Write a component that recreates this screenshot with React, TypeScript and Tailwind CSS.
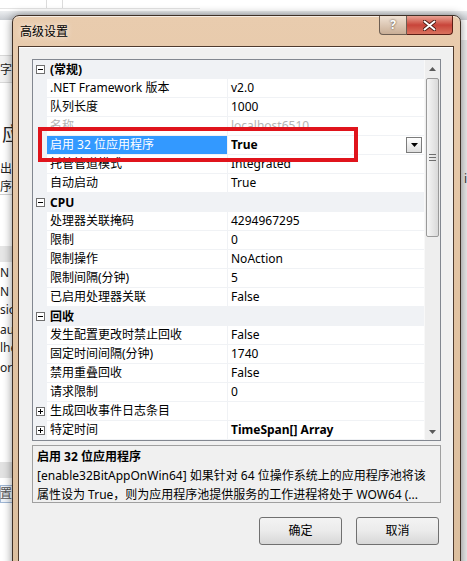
import React from "react";

type Row =
  | { kind: "cat"; label: string }
  | {
      kind: "prop";
      name: string;
      value: string;
      faded?: boolean;
      selected?: boolean;
      bold?: boolean;
      expander?: boolean;
    };

const rows: Row[] = [
  { kind: "cat", label: "(常规)" },
  { kind: "prop", name: ".NET Framework 版本", value: "v2.0" },
  { kind: "prop", name: "队列长度", value: "1000" },
  { kind: "prop", name: "名称", value: "localhost6510", faded: true },
  { kind: "prop", name: "启用 32 位应用程序", value: "True", selected: true, bold: true },
  { kind: "prop", name: "托管管道模式", value: "Integrated" },
  { kind: "prop", name: "自动启动", value: "True" },
  { kind: "cat", label: "CPU" },
  { kind: "prop", name: "处理器关联掩码", value: "4294967295" },
  { kind: "prop", name: "限制", value: "0" },
  { kind: "prop", name: "限制操作", value: "NoAction" },
  { kind: "prop", name: "限制间隔(分钟)", value: "5" },
  { kind: "prop", name: "已启用处理器关联", value: "False" },
  { kind: "cat", label: "回收" },
  { kind: "prop", name: "发生配置更改时禁止回收", value: "False" },
  { kind: "prop", name: "固定时间间隔(分钟)", value: "1740" },
  { kind: "prop", name: "禁用重叠回收", value: "False" },
  { kind: "prop", name: "请求限制", value: "0" },
  { kind: "prop", name: "生成回收事件日志条目", value: "", expander: true },
  { kind: "prop", name: "特定时间", value: "TimeSpan[] Array", bold: true, expander: true },
];

// 树形展开框 ⊟ / ⊞
function Toggle({ plus }: { plus?: boolean }) {
  return (
    <svg width="9" height="9" viewBox="0 0 9 9" className="block">
      <rect x="0.5" y="0.5" width="8" height="8" fill="#fff" stroke="#6f6f6f" />
      <line x1="2" y1="4.5" x2="7" y2="4.5" stroke="#000" />
      {plus && <line x1="4.5" y1="2" x2="4.5" y2="7" stroke="#000" />}
    </svg>
  );
}

function GridRow({ row }: { row: Row }) {
  if (row.kind === "cat") {
    return (
      <div className="flex h-[19px] items-center bg-[#f0f2f5]">
        <div className="flex w-[14px] justify-end pr-[2px]">
          <Toggle />
        </div>
        <span className="pl-[3px] font-bold text-black">{row.label}</span>
      </div>
    );
  }
  return (
    <div className="flex h-[19px]">
      <div className="flex w-[14px] items-center justify-end bg-[#f0f2f5] pr-[2px]">
        {row.expander && <Toggle plus />}
      </div>
      <div
        className={
          row.selected
            ? "flex w-[180px] items-center border-b border-[#f0f2f5] bg-[#3399ff] pl-[3px] text-white"
            : row.faded
            ? "flex w-[180px] items-center border-b border-[#f0f2f5] pl-[3px] text-[#b4b4b4]"
            : "flex w-[180px] items-center border-b border-[#f0f2f5] pl-[3px] text-black"
        }
      >
        <span className="whitespace-nowrap">{row.name}</span>
      </div>
      <div className="w-px bg-[#f0f2f5]" />
      <div
        className={
          row.faded
            ? "flex flex-1 items-center border-b border-[#f0f2f5] pl-[3px] text-[#b4b4b4]"
            : "flex flex-1 items-center border-b border-[#f0f2f5] pl-[3px] text-black"
        }
      >
        <span className={row.bold ? "whitespace-nowrap font-bold" : "whitespace-nowrap"}>{row.value}</span>
        {row.selected && (
          <div className="ml-auto mr-[2px] flex h-[16px] w-[16px] items-center justify-center border border-[#7c7c7c] bg-gradient-to-b from-[#ffffff] to-[#dedede]">
            <svg width="7" height="4" viewBox="0 0 7 4">
              <path d="M0 0h7L3.5 4z" fill="#000" />
            </svg>
          </div>
        )}
      </div>
    </div>
  );
}

function ScrollBar() {
  return (
    <div className="flex w-[16px] flex-col border-l border-[#f8f8f8] bg-[#eeeeee]">
      <div className="flex h-[17px] items-center justify-center">
        <svg width="7" height="4" viewBox="0 0 7 4">
          <path d="M0 4h7L3.5 0z" fill="#5a5a5a" />
        </svg>
      </div>
      <div className="mx-px mt-px flex h-[159px] items-center justify-center rounded-[2px] border border-[#9a9a9a] bg-gradient-to-r from-[#f6f6f6] to-[#d9d9d9]">
        <div className="flex flex-col gap-[2px]">
          <div className="h-px w-[7px] bg-[#6e6e6e]" />
          <div className="h-px w-[7px] bg-[#6e6e6e]" />
          <div className="h-px w-[7px] bg-[#6e6e6e]" />
        </div>
      </div>
      <div className="flex-1" />
      <div className="flex h-[17px] items-center justify-center">
        <svg width="7" height="4" viewBox="0 0 7 4">
          <path d="M0 0h7L3.5 4z" fill="#5a5a5a" />
        </svg>
      </div>
    </div>
  );
}

// 对话框后面那个被挡住的窗口
function Backdrop() {
  return (
    <div className="absolute inset-0 bg-white text-[12px] leading-[14px] text-[#222]">
      <div className="absolute left-0 top-0 flex h-[9px] w-[200px] border-b border-[#e4e4e4]">
        <div className="w-[47px] border-r border-[#dcdcdc]" />
        <div className="w-[16px] border-r border-[#dcdcdc]" />
      </div>
      <div className="absolute left-0 top-[11px] h-[9px] w-[467px] bg-gradient-to-b from-[#eceef0] to-[#c9cdd2]" />
      <div className="absolute left-0 top-[55px] h-[28px] w-[40px] border-y border-[#d8d8d8] bg-[#f2f2f2]" />
      <span className="absolute left-0 top-[63px]">字段</span>
      <span className="absolute left-[2px] top-[124px] text-[19px] leading-[20px]">应用</span>
      <span className="absolute left-0 top-[162px] w-[12px] overflow-hidden whitespace-nowrap">出错</span>
      <span className="absolute left-0 top-[180px] w-[12px] overflow-hidden whitespace-nowrap">序，</span>
      <div className="absolute left-0 top-[194px] h-px w-[40px] bg-[#d0d0d0]" />
      <div className="absolute left-0 top-[246px] h-[16px] w-[40px] bg-[#e6e6e6]" />
      <span className="absolute left-0 top-[266px]">N</span>
      <span className="absolute left-0 top-[285px]">N</span>
      <span className="absolute left-0 top-[303px]">sio</span>
      <span className="absolute left-0 top-[323px]">aul</span>
      <span className="absolute left-0 top-[341px]">lhe</span>
      <span className="absolute left-0 top-[361px]">or</span>
      <div className="absolute left-0 top-[462px] h-[16px] w-[40px] bg-[#e2e2e2]" />
      <div className="absolute left-0 top-[485px] h-[18px] w-[30px] border border-[#9fb6d4] bg-[#eef3f9]" />
      <span className="absolute left-0 top-[487px] text-[#555]">置</span>
      <div className="absolute right-0 top-[40px] h-[521px] w-[8px] bg-[#e9e9e9]" />
      <span className="absolute right-0 top-[172px] text-[#333]">i</span>
    </div>
  );
}

export default function App() {
  return (
    <div className="relative h-[561px] w-[467px] overflow-hidden font-['Noto_Sans','Noto_Sans_CJK_SC',sans-serif] text-[12px]">
      <Backdrop />

      {/* 高级设置 对话框 */}
      <div className="absolute left-[12px] top-[15px] flex h-[560px] w-[449px] flex-col rounded-t-[7px] border border-[#3f3026] bg-gradient-to-b from-[#e9ccae] via-[#e2c3a2] to-[#dcbf9f] shadow-[0_0_10px_rgba(0,0,0,0.45),inset_0_1px_0_#f6ece2]">
        <div className="flex h-[30px] items-start">
          <span className="mt-[7px] pl-[7px] text-[12px] text-black [text-shadow:0_0_6px_#fff]">高级设置</span>
          <div className="ml-auto mr-[7px] flex">
            <div className="flex h-[19px] w-[28px] items-center justify-center rounded-bl-[4px] border border-t-0 border-[#6d5e52] bg-gradient-to-b from-[#f0e2d4] to-[#c9ae96]">
              <span className="text-[12px] font-bold leading-none text-white [text-shadow:0_0_2px_#3a2c20]">?</span>
            </div>
            <div className="flex h-[19px] w-[46px] items-center justify-center rounded-br-[4px] border border-l-0 border-t-0 border-[#5a1e16] bg-gradient-to-b from-[#e8a294] via-[#c8443a] to-[#d9725e]">
              <svg width="13" height="11" viewBox="0 0 13 11">
                <path d="M1.5 1.5l10 8M11.5 1.5l-10 8" stroke="#4a1a12" strokeWidth="3.6" strokeLinecap="round" />
                <path d="M1.5 1.5l10 8M11.5 1.5l-10 8" stroke="#ffffff" strokeWidth="2" strokeLinecap="round" />
              </svg>
            </div>
          </div>
        </div>

        <div className="ml-[5px] mr-[6px] flex flex-1 flex-col border border-[#4f3b2e] bg-[#f0f0f0] px-[13px] pt-[12px] shadow-[inset_0_1px_0_#ffffff]">
          {/* 属性网格 */}
          <div className="flex h-[382px] w-[409px] border border-[#828790] bg-white">
            <div className="flex w-[391px] flex-col">
              {rows.map((r, i) => (
                <GridRow key={i} row={r} />
              ))}
            </div>
            <ScrollBar />
          </div>

          {/* 说明区 */}
          <div className="mt-[4px] h-[58px] w-[409px] overflow-hidden border border-[#a0a0a0] bg-[#f0f0f0] px-[4px] pt-px leading-[19px] text-black">
            <div className="font-bold">启用 32 位应用程序</div>
            <div className="whitespace-nowrap">[enable32BitAppOnWin64] 如果针对 64 位操作系统上的应用程序池将该</div>
            <div className="whitespace-nowrap">属性设为 True，则为应用程序池提供服务的工作进程将处于 WOW64 (...</div>
          </div>

          <div className="mt-[14px] flex justify-end gap-[14px] pr-px">
            <button className="h-[28px] w-[83px] rounded-[3px] border border-[#707070] bg-gradient-to-b from-[#f3f3f3] via-[#ebebeb] to-[#d7d7d7] text-[12px] text-black">
              确定
            </button>
            <button className="h-[28px] w-[83px] rounded-[3px] border border-[#707070] bg-gradient-to-b from-[#f3f3f3] via-[#ebebeb] to-[#d7d7d7] text-[12px] text-black">
              取消
            </button>
          </div>
        </div>
      </div>

      {/* 红框标注 */}
      <div className="absolute left-[38px] top-[127px] h-[35px] w-[320px] border-[4px] border-[#e0141c]" />
    </div>
  );
}
